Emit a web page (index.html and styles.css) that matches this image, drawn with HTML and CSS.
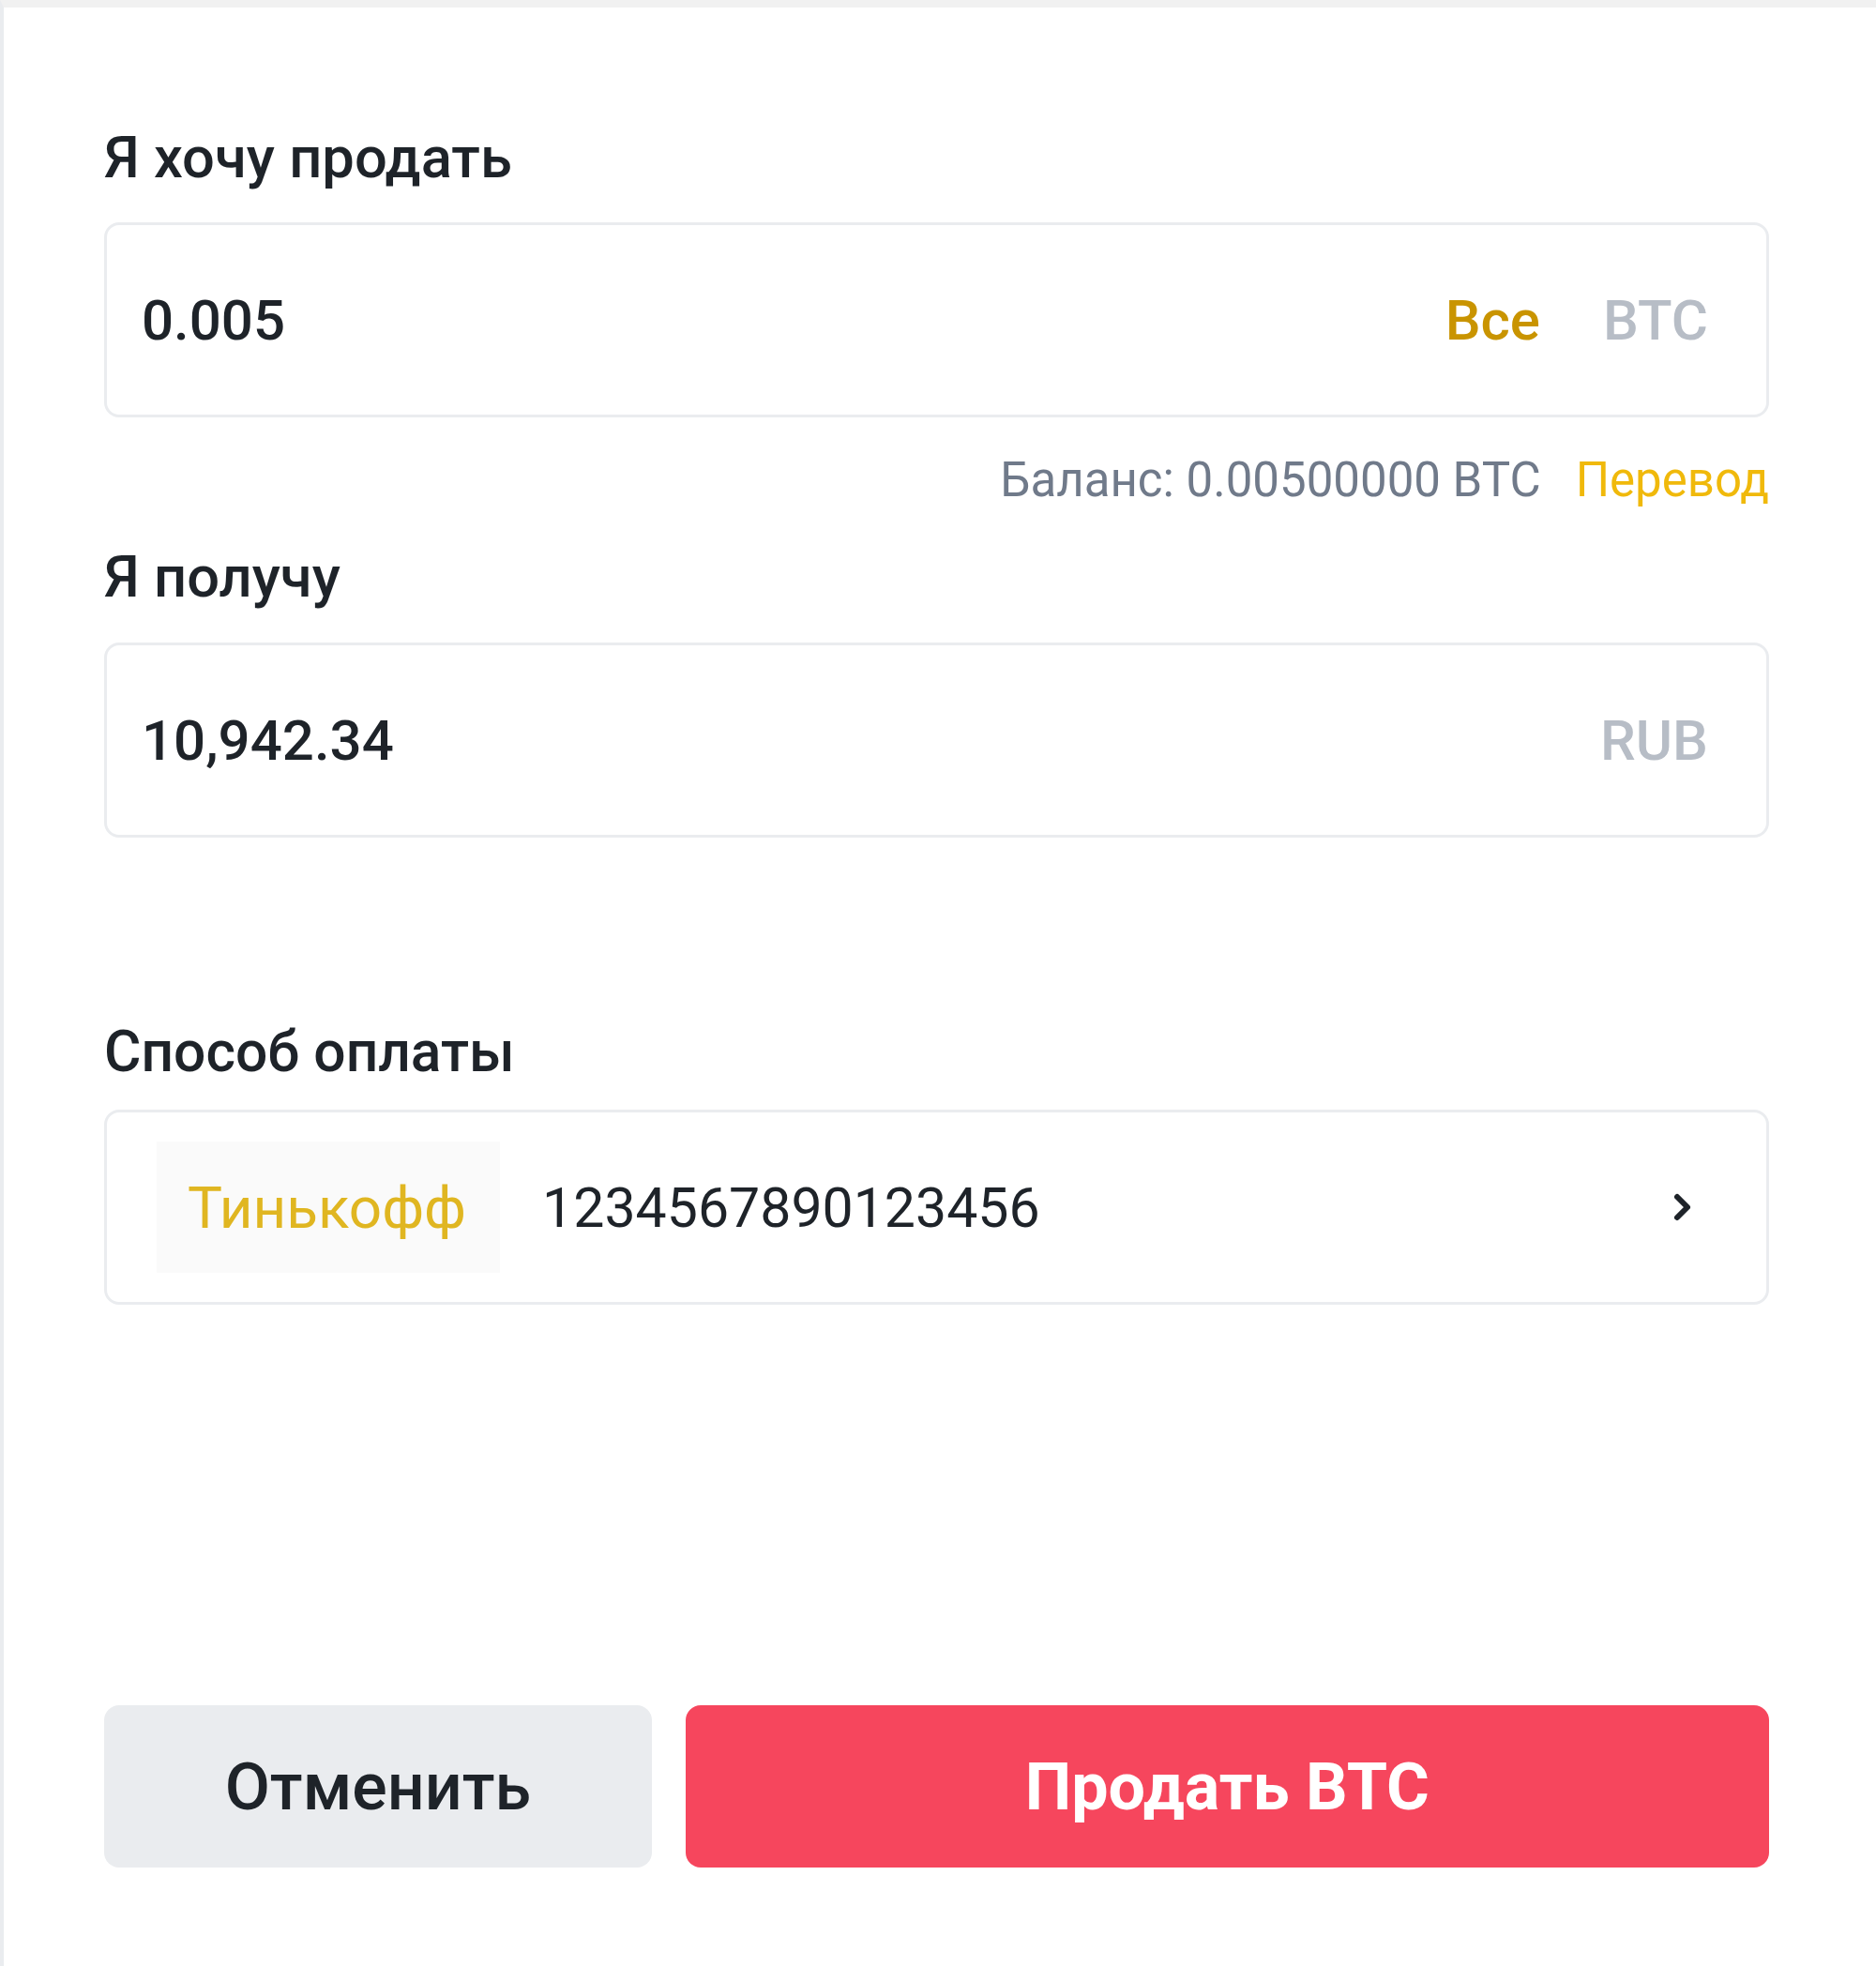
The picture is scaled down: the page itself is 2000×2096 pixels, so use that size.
FILE: index.html
```html
<!DOCTYPE html>
<html lang="ru">

<head>
  <meta charset="UTF-8">
  <meta name="viewport" content="width=device-width">
  <title>Продать BTC</title>
  <link rel="stylesheet" href="styles.css">
</head>

<body>
  <div class="panel">
    <div class="label first">Я хочу продать</div>
    <div class="box">
      <span class="value">0.005</span>
      <span class="all">Все</span>
      <span class="unit">BTC</span>
    </div>
    <div class="balance">Баланс: 0.00500000 BTC<span class="transfer">Перевод</span></div>

    <div class="label second">Я получу</div>
    <div class="box">
      <span class="value">10,942.34</span>
      <span class="unit">RUB</span>
    </div>

    <div class="label third">Способ оплаты</div>
    <div class="box method">
      <span class="bank">Тинькофф</span>
      <span class="account">1234567890123456</span>
      <svg class="chevron" width="22" height="32" viewBox="0 0 22 32">
        <path d="M5 5 L16 16 L5 27" fill="none" stroke="#1e2329" stroke-width="6" stroke-linecap="round" stroke-linejoin="round" />
      </svg>
    </div>

    <div class="actions">
      <button class="btn cancel">Отменить</button>
      <button class="btn sell">Продать BTC</button>
    </div>
  </div>
</body>

</html>
```

FILE: styles.css
```css
* {
  box-sizing: border-box;
}

html,
body {
  margin: 0;
  padding: 0;
  background-color: #fff;
  font-family: Roboto, 'Noto Sans', sans-serif;
  color: #1e2329;
  --border-color: #eaecef;
  --radius: 16px;
  --gold: #c99400;
  --muted: #b7bdc6;
}

.panel {
  min-height: 2096px;
  border-top: 8px solid #f1f1f1;
  border-left: 4px solid var(--border-color);
  padding: 120px 114px 0 107px;
  display: flex;
  flex-direction: column;
}

.label {
  font-size: 61.5px;
  font-weight: 500;
  line-height: 80px;
}

.label.second {
  margin-top: 33px;
}

.label.third {
  margin-top: 189px;
  font-size: 60.5px;
}

.box {
  margin-top: 29px;
  height: 208px;
  border: 3px solid var(--border-color);
  border-radius: var(--radius);
  display: flex;
  align-items: center;
  padding: 0 62px 0 37px;
  font-size: 60px;
}

.label.second + .box {
  margin-top: 30px;
}

.label.third + .box {
  margin-top: 21px;
}

.value {
  flex: 1;
  font-weight: 500;
}

.all {
  color: var(--gold);
  font-weight: 500;
  margin-right: 67px;
}

.unit {
  color: var(--muted);
  font-weight: 500;
}

.balance {
  margin-top: 37px;
  line-height: 60px;
  font-size: 51px;
  color: #707a8a;
  text-align: right;
}

.transfer {
  color: #f0b90b;
  margin-left: 37px;
}

.method {
  padding: 0 78px 0 53px;
}

.bank {
  background-color: #fafafa;
  color: #e0b621;
  font-size: 62px;
  height: 140px;
  display: flex;
  align-items: center;
  padding: 0 36px 0 33px;
}

.account {
  flex: 1;
  margin-left: 45px;
  font-size: 59px;
}

.chevron {
  display: block;
}

.actions {
  margin-top: 427px;
  display: flex;
  gap: 36px;
}

.btn {
  height: 173px;
  border: none;
  border-radius: var(--radius);
  font-family: Roboto, 'Noto Sans', sans-serif;
  font-size: 70px;
  cursor: pointer;
}

.cancel {
  flex: 1;
  background-color: var(--border-color);
  color: #1e2329;
  font-weight: 500;
}

.sell {
  flex: 2;
  background-color: #f6465d;
  color: #fff;
  font-weight: 700;
}
```
